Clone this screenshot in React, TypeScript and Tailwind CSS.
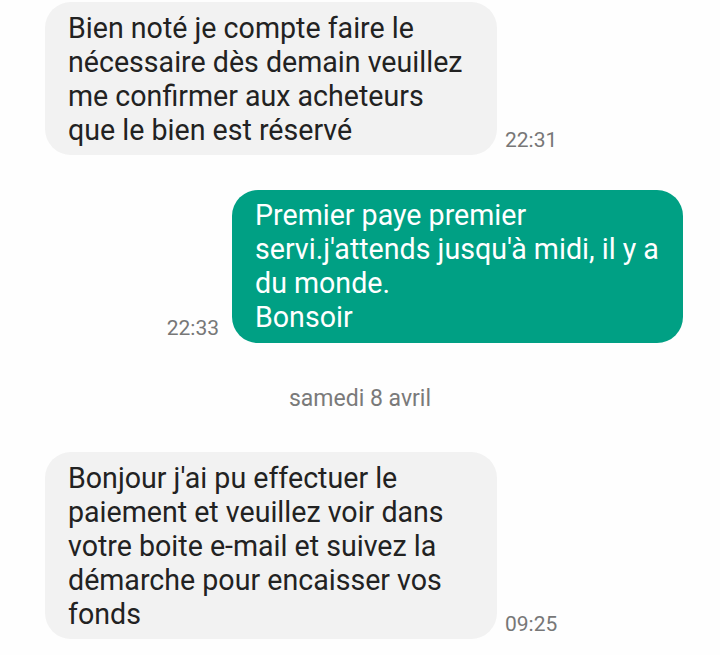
const font = { fontFamily: "Roboto, 'Noto Sans', sans-serif" };

type Msg = { text: string; time: string; mine?: boolean };

function Bubble({ msg }: { msg: Msg }) {
  if (msg.mine) {
    return (
      <div className="flex items-end justify-end pr-[37px]">
        <span className="mr-[13px] mb-[2px] text-[21px] leading-[26px] text-[#777777]">{msg.time}</span>
        <div className="w-[451px] rounded-[26px] bg-[#00a084] pl-[23px] pr-[20px] pt-[8px] pb-[9px] text-[28.6px] leading-[34px] text-white whitespace-pre-line">
          {msg.text}
        </div>
      </div>
    );
  }
  return (
    <div className="flex items-end pl-[45px]">
      <div className="w-[452px] rounded-[26px] bg-[#f2f2f2] pl-[23px] pr-[20px] pt-[9px] pb-[8px] text-[28.6px] leading-[34px] text-[#222222]">
        {msg.text}
      </div>
      <span className="ml-[8px] mb-[2px] text-[21px] leading-[26px] text-[#777777]">{msg.time}</span>
    </div>
  );
}

export default function App() {
  return (
    <div className="w-[720px] h-[655px] overflow-hidden bg-[#fefefe] pt-[2px]" style={font}>
      <Bubble
        msg={{
          text: "Bien noté je compte faire le nécessaire dès demain veuillez me confirmer aux acheteurs que le bien est réservé",
          time: "22:31",
        }}
      />
      <div className="mt-[35px]">
        <Bubble
          msg={{
            text: "Premier paye premier servi.j'attends jusqu'à midi, il y a du monde.\nBonsoir",
            time: "22:33",
            mine: true,
          }}
        />
      </div>
      <div className="mt-[43px] mb-[40px] text-center text-[23px] leading-[26px] text-[#7a7a7a]">
        samedi 8 avril
      </div>
      <Bubble
        msg={{
          text: "Bonjour j'ai pu effectuer le paiement et veuillez voir dans votre boite e-mail et suivez la démarche pour encaisser vos fonds",
          time: "09:25",
        }}
      />
    </div>
  );
}
